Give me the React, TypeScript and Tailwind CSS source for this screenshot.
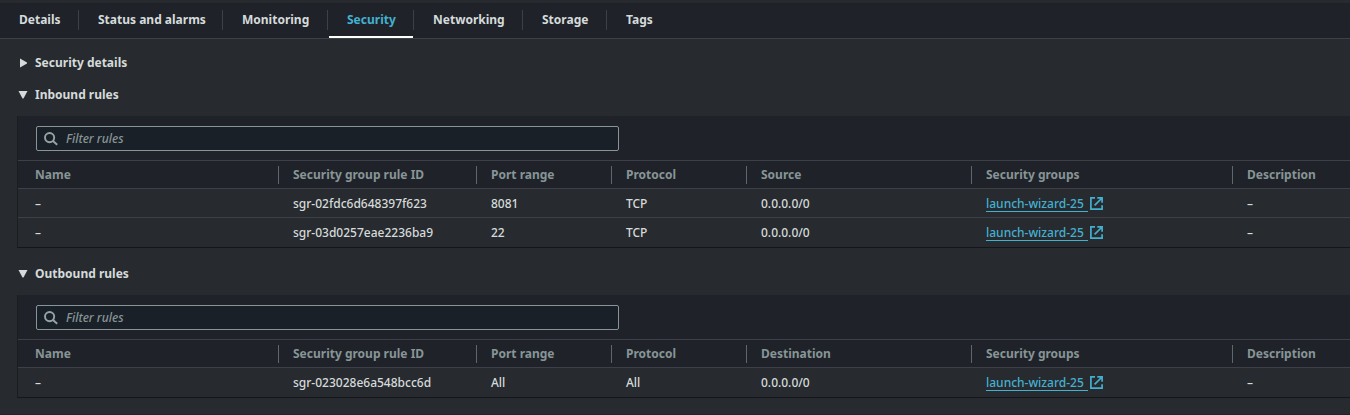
import { useState } from 'react'
import type { ReactNode } from 'react'
import clsx from 'clsx'

type Rule = {
  name: string
  id: string
  port: string
  protocol: string
  peer: string
  group: string
  description: string
}

const tabs = [
  { label: 'Details', width: 'w-[79px]' },
  { label: 'Status and alarms', width: 'w-36' },
  { label: 'Monitoring', width: 'w-[105px]' },
  { label: 'Security', width: 'w-[86px]' },
  { label: 'Networking', width: 'w-[109px]' },
  { label: 'Storage', width: 'w-[84px]' },
  { label: 'Tags', width: 'w-[72px]' },
]

const inbound: Rule[] = [
  { name: '–', id: 'sgr-02fdc6d648397f623', port: '8081', protocol: 'TCP', peer: '0.0.0.0/0', group: 'launch-wizard-25', description: '–' },
  { name: '–', id: 'sgr-03d0257eae2236ba9', port: '22', protocol: 'TCP', peer: '0.0.0.0/0', group: 'launch-wizard-25', description: '–' },
]

const outbound: Rule[] = [
  { name: '–', id: 'sgr-023028e6a548bcc6d', port: 'All', protocol: 'All', peer: '0.0.0.0/0', group: 'launch-wizard-25', description: '–' },
]

function SearchIcon() {
  return (
    <svg className="size-[14px] shrink-0 text-[#95a5a6]" viewBox="0 0 14 14" fill="none" stroke="currentColor" strokeWidth="1.9" aria-hidden="true">
      <circle cx="5.6" cy="5.6" r="4.6" />
      <path d="M9 9 13.2 12.8" />
    </svg>
  )
}

function ExternalIcon() {
  return (
    <svg className="mt-px size-[13px] shrink-0" viewBox="0 0 13 13" fill="none" stroke="currentColor" strokeWidth="1.7" aria-hidden="true">
      <path d="M5 .9H.9v11.2h11.2V8.2" />
      <path d="M7.3.9h4.8v4.8M12 1 4.6 8.4" />
    </svg>
  )
}

function TabBar() {
  const [active, setActive] = useState('Security')
  return (
    <div role="tablist" className="flex border-t-3 border-b border-t-[#272a2e] border-b-[#3d4049] bg-[#1f2229]">
      {tabs.map((tab, i) => {
        const selected = tab.label === active
        return (
          <button
            key={tab.label}
            role="tab"
            aria-selected={selected}
            onClick={() => setActive(tab.label)}
            className={clsx('flex h-[35px] flex-col text-left font-bold', tab.width, selected ? 'text-[#44b0d0]' : 'text-[#d5dbdb]')}
          >
            <span
              className={clsx(
                'mt-[7px] flex h-5 w-full items-center pl-[19px] whitespace-nowrap',
                i < tabs.length - 1 && 'border-r border-[#3d4049]',
              )}
            >
              {tab.label}
            </span>
            <span className={clsx('mt-[6px] mr-px ml-px h-0.5 self-stretch', selected && 'bg-white')} />
          </button>
        )
      })}
    </div>
  )
}

function Section({ title, initiallyOpen = false, children }: { title: string; initiallyOpen?: boolean; children?: ReactNode }) {
  const [open, setOpen] = useState(initiallyOpen)
  return (
    <section>
      <button aria-expanded={open} onClick={() => setOpen(!open)} className="flex h-8 items-center gap-[7px] pl-[18px] font-bold text-[#d5dbdb]">
        <svg className="size-[10px]" viewBox="0 0 10 10" fill="currentColor" aria-hidden="true">
          {open ? <path d="M.5 1h9L5.5 8.6h-1z" /> : <path d="M2 .5v9l7-4v-1z" />}
        </svg>
        {title}
      </button>
      {open && children}
    </section>
  )
}

function HeaderCell({ children, width, first, last }: { children: ReactNode; width?: string; first?: boolean; last?: boolean }) {
  return (
    <th scope="col" className={clsx('h-7 p-0 text-left font-bold text-[#879596]', width)}>
      <div className={clsx('flex h-[18px] items-center whitespace-nowrap', first ? 'pl-[17px]' : 'pl-[14px]', !last && 'border-r border-[#5f666e]')}>{children}</div>
    </th>
  )
}

function RulesPanel({ label, peerLabel, rules }: { label: string; peerLabel: string; rules: Rule[] }) {
  return (
    <div className="mt-[5px] mb-[10px] ml-[17px] border-b border-l border-b-[#141619] border-l-[#1b1d21]">
      <div className="bg-[#1f2229] pt-[10px] pb-[9px] pl-[18px]">
        <label className="flex h-[25px] w-[583px] max-w-full items-center gap-2 rounded-xs border border-[#879596] bg-[#1a2027] pl-[7px]">
          <SearchIcon />
          <input
            type="search"
            aria-label={label}
            placeholder="Filter rules"
            className="min-w-0 flex-1 bg-transparent font-medium text-[#d5dbdb] outline-none placeholder:text-[#879596] placeholder:italic"
          />
        </label>
      </div>
      <table className="w-full table-fixed border-separate border-spacing-0">
        <thead className="bg-[#1f2229] [&_th]:border-y [&_th]:border-[#3d4049]">
          <tr className="h-[29px]">
            <HeaderCell width="w-[261px]" first>Name</HeaderCell>
            <HeaderCell width="w-[198px]">Security group rule ID</HeaderCell>
            <HeaderCell width="w-[135px]">Port range</HeaderCell>
            <HeaderCell width="w-[135px]">Protocol</HeaderCell>
            <HeaderCell width="w-[225px]">{peerLabel}</HeaderCell>
            <HeaderCell width="w-[261px]">Security groups</HeaderCell>
            <HeaderCell last>Description</HeaderCell>
          </tr>
        </thead>
        <tbody className="font-medium text-[#d5dbdb] [&_td]:h-[29px] [&_td]:border-b [&_td]:border-[#3d4049] [&_td]:p-0 [&_td]:pt-0.5 [&_td]:pl-[14px] [&_td:first-child]:pl-[17px] [&_tr:last-child>td]:border-transparent">
          {rules.map((rule) => (
            <tr key={rule.id}>
              <td>{rule.name}</td>
              <td>{rule.id}</td>
              <td>{rule.port}</td>
              <td>{rule.protocol}</td>
              <td>{rule.peer}</td>
              <td>
                <a href="#security-group" className="flex items-start gap-[2px] text-[#44b0d0]">
                  <span className="h-4 border-b border-[#44b0d0] pr-1 leading-4">{rule.group}</span>
                  <ExternalIcon />
                </a>
              </td>
              <td>{rule.description}</td>
            </tr>
          ))}
        </tbody>
      </table>
    </div>
  )
}

export default function App() {
  return (
    <div className="min-h-screen overflow-x-hidden border-b border-[#1f2229] bg-[#272a2e] font-['Noto_Sans',sans-serif] text-[12px] leading-4">
      <TabBar />
      <main className="pt-2">
        <Section title="Security details" />
        <Section title="Inbound rules" initiallyOpen>
          <RulesPanel label="Filter inbound rules" peerLabel="Source" rules={inbound} />
        </Section>
        <Section title="Outbound rules" initiallyOpen>
          <RulesPanel label="Filter outbound rules" peerLabel="Destination" rules={outbound} />
        </Section>
      </main>
    </div>
  )
}
